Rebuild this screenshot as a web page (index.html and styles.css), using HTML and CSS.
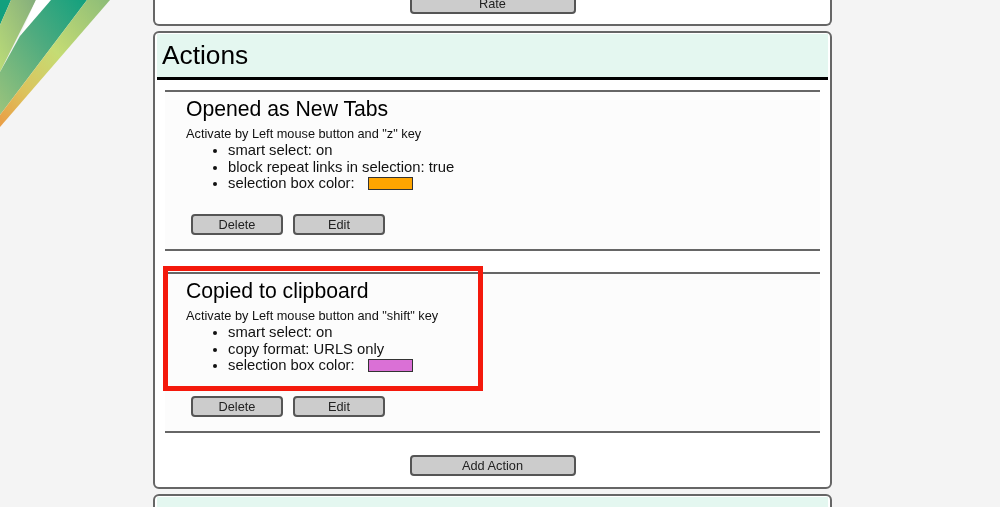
FILE: index.html
```html
<!DOCTYPE html>
<html lang="en">
<head>
    <meta charset="UTF-8">
    <title>Options - Actions</title>
    <link rel="stylesheet" href="styles.css">
</head>
<body>
    <svg class="logo" width="120" height="130" viewBox="0 0 120 130">
        <defs>
            <linearGradient id="bandA" x1="0" y1="1" x2="1" y2="0">
                <stop offset="0" stop-color="#9cc47c"/>
                <stop offset="0.55" stop-color="#4fab7f"/>
                <stop offset="1" stop-color="#12a07e"/>
            </linearGradient>
            <linearGradient id="bandB" x1="0" y1="1" x2="1" y2="0">
                <stop offset="0" stop-color="#ea9d45"/>
                <stop offset="0.25" stop-color="#dcc35c"/>
                <stop offset="0.55" stop-color="#c5dc74"/>
                <stop offset="1" stop-color="#8cbc78"/>
            </linearGradient>
            <linearGradient id="bandC" x1="0" y1="1" x2="1" y2="0">
                <stop offset="0" stop-color="#bcdc78"/>
                <stop offset="1" stop-color="#84ae7c"/>
            </linearGradient>
        </defs>
        <polygon points="0,0 11,0 0,25" fill="#12a07e"/>
        <polygon points="11,0 36,0 0,72 0,25" fill="url(#bandC)"/>
        <polygon points="36,0 51,0 20,36" fill="#fff"/>
        <polygon points="51,0 87,0 0,115 0,72 20,36" fill="url(#bandA)"/>
        <polygon points="87,0 110,0 0,127 0,115" fill="url(#bandB)"/>
    </svg>

    <div class="page">
        <section class="card card-top">
            <button class="btn btn-wide">Rate</button>
        </section>

        <section class="card">
            <h2 class="card-title">Actions</h2>
            <div class="action-list">
                <div class="action">
                    <h3>Opened as New Tabs</h3>
                    <div class="action-desc">Activate by Left mouse button and "z" key</div>
                    <ul>
                        <li>smart select: on</li>
                        <li>block repeat links in selection: true</li>
                        <li>selection box color: <span class="swatch swatch-orange"></span></li>
                    </ul>
                    <div class="action-btns">
                        <button class="btn">Delete</button>
                        <button class="btn">Edit</button>
                    </div>
                </div>
                <div class="action">
                    <div class="highlight"></div>
                    <h3>Copied to clipboard</h3>
                    <div class="action-desc">Activate by Left mouse button and "shift" key</div>
                    <ul>
                        <li>smart select: on</li>
                        <li>copy format: URLS only</li>
                        <li>selection box color: <span class="swatch swatch-orchid"></span></li>
                    </ul>
                    <div class="action-btns">
                        <button class="btn">Delete</button>
                        <button class="btn">Edit</button>
                    </div>
                </div>
            </div>
            <div class="card-foot">
                <button class="btn btn-wide">Add Action</button>
            </div>
        </section>

        <section class="card">
            <h2 class="card-title card-title-green">FAQ</h2>
        </section>
    </div>
</body>
</html>
```

FILE: styles.css
```css
html, body {
    height: 507px;
}

body {
    margin: 0;
    background: #f4f4f4;
    font-family: "Liberation Sans", Arial, sans-serif;
    color: #111;
    overflow: hidden;
    position: relative;
}

.logo {
    position: absolute;
    top: 0;
    left: 0;
    filter: blur(0.5px);
}

.page {
    width: 679px;
    margin-left: 153px;
    display: flex;
    flex-direction: column;
    gap: 5px;
    filter: blur(0.4px);
}

.card {
    background: #fff;
    border: 2px solid #666;
    border-radius: 6px;
    padding: 1px;
}

.card-top {
    height: 14px;
    border-top: none;
    border-radius: 0 0 6px 6px;
    display: flex;
    justify-content: center;
    align-items: flex-end;
    padding: 0 0 10px 0;
}

.card-title {
    margin: 0 1px;
    height: 43px;
    line-height: 43px;
    padding-left: 5px;
    font-size: 26.3px;
    font-weight: normal;
    color: #000;
    background: #e4f7f0;
    border-bottom: 3px solid #000;
}

.card-title-green {
    line-height: 39px;
    color: #4fb08c;
}

.action-list {
    margin: 10px 9px 0;
    display: flex;
    flex-direction: column;
    gap: 21px;
}

.action {
    position: relative;
    height: 161px;
    box-sizing: border-box;
    background: #fcfcfc;
    border-top: 2px solid #666;
    border-bottom: 2px solid #666;
    padding: 5px 0 0 21px;
}

.action h3 {
    margin: 0;
    font-size: 21.2px;
    line-height: 23px;
    font-weight: normal;
    color: #000;
}

.action-desc {
    margin-top: 7px;
    font-size: 12.75px;
    line-height: 14px;
}

.action ul {
    margin: 1px 0 0;
    padding-left: 42px;
    font-size: 14.8px;
    line-height: 16.5px;
}

.swatch {
    display: inline-block;
    width: 43px;
    height: 11px;
    margin-left: 9px;
    border: 1px solid #333;
    vertical-align: -2px;
}

.swatch-orange {
    background: #ffa500;
}

.swatch-orchid {
    background: #da70d6;
}

.action-btns {
    margin: 22px 0 0 5px;
    display: flex;
    gap: 10px;
}

.btn {
    width: 92px;
    height: 21px;
    padding: 0;
    background: #ccc;
    border: 2px solid #555;
    border-radius: 4px;
    font-family: inherit;
    font-size: 12.75px;
    color: #222;
}

.btn-wide {
    width: 166px;
}

.card-foot {
    display: flex;
    justify-content: center;
    padding: 22px 0 10px;
}

.highlight {
    position: absolute;
    top: -8px;
    left: -2px;
    width: 310px;
    height: 115px;
    border: 5px solid #f4190c;
    pointer-events: none;
}
```
